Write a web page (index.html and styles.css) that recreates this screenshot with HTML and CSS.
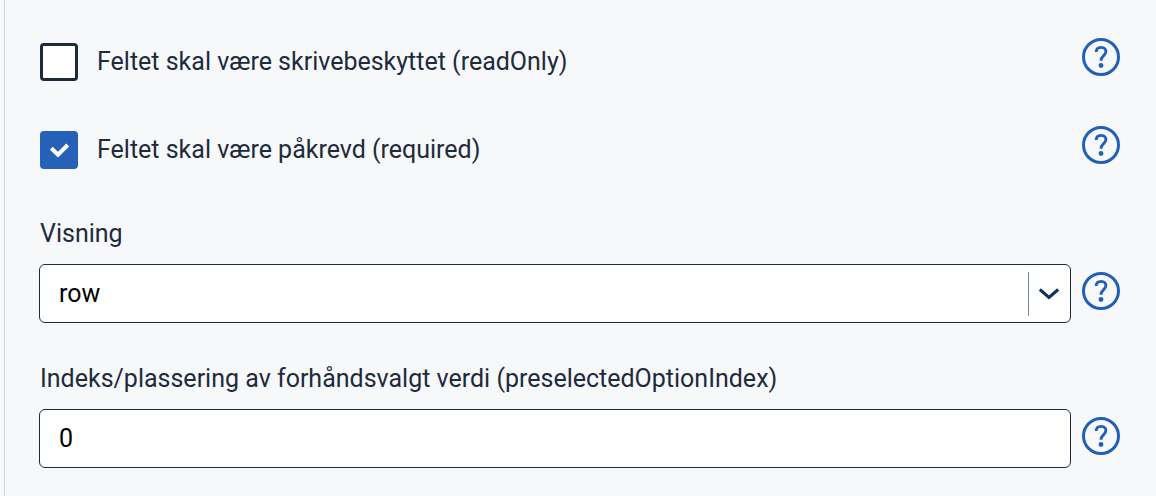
FILE: index.html
```html
<!DOCTYPE html>
<html lang="nb">
<head>
<meta charset="utf-8">
<meta name="viewport" content="width=device-width, initial-scale=1">
<title>Feltinnstillinger</title>
<link rel="stylesheet" href="styles.css">
</head>
<body>
<svg class="sprite" aria-hidden="true">
  <symbol id="help" viewBox="0 0 38 38">
    <circle cx="19" cy="19" r="17.5" fill="none" stroke="currentColor" stroke-width="3"/>
    <path d="M14.2 14C14.2 11 16.3 9.4 19.2 9.4C22 9.4 23.9 11.1 23.9 13.6C23.9 17.6 19 17.8 19 22.8" fill="none" stroke="currentColor" stroke-width="2.9"/>
    <circle cx="19" cy="27.5" r="2.4" fill="currentColor"/>
  </symbol>
</svg>
<form class="panel">
  <div class="row">
    <div class="check">
      <span class="box">
        <input class="box-input" type="checkbox" id="readonly">
        <svg class="box-mark" viewBox="0 0 38 38" aria-hidden="true"><path d="M11.3 17.2L18 23.7L27.7 14"/></svg>
      </span>
      <label class="label" for="readonly">Feltet skal være skrivebeskyttet (readOnly)</label>
    </div>
    <button class="help" type="button" aria-label="Hjelp"><svg class="help-icon"><use href="#help"/></svg></button>
  </div>
  <div class="row">
    <div class="check">
      <span class="box">
        <input class="box-input" type="checkbox" id="required" checked>
        <svg class="box-mark" viewBox="0 0 38 38" aria-hidden="true"><path d="M11.3 17.2L18 23.7L27.7 14"/></svg>
      </span>
      <label class="label" for="required">Feltet skal være påkrevd (required)</label>
    </div>
    <button class="help" type="button" aria-label="Hjelp"><svg class="help-icon"><use href="#help"/></svg></button>
  </div>
  <div class="field">
    <label class="label label-field" for="layout">Visning</label>
    <div class="row row-field">
      <div class="select">
        <select class="control" id="layout"><option selected>row</option><option>column</option></select>
        <span class="arrow"><svg class="arrow-icon" viewBox="0 0 22 14" aria-hidden="true"><path d="M1.8 2.5L11 10.5L20.2 2.5"/></svg></span>
      </div>
      <button class="help" type="button" aria-label="Hjelp"><svg class="help-icon"><use href="#help"/></svg></button>
    </div>
  </div>
  <div class="field">
    <label class="label label-field" for="index">Indeks/plassering av forhåndsvalgt verdi (preselectedOptionIndex)</label>
    <div class="row row-field">
      <input class="control" type="text" inputmode="numeric" id="index" value="0">
      <button class="help" type="button" aria-label="Hjelp"><svg class="help-icon"><use href="#help"/></svg></button>
    </div>
  </div>
</form>
</body>
</html>
```

FILE: styles.css
```css
* {
  box-sizing: border-box;
}

body {
  margin: 0;
  padding-left: 4px;
  background: #f7f8fa;
  color: #1e2b3c;
  font-family: Roboto, "Liberation Sans", sans-serif;
  font-size: 25px;
  line-height: 32px;
}

.sprite {
  display: none;
}

.panel {
  min-height: 100vh;
  padding: 38px 36px 28px 34px;
  border-left: 1px solid #d2d5d8;
}

.row {
  display: grid;
  grid-template-columns: minmax(0, 1fr) 38px;
  column-gap: 11px;
  align-items: start;
  margin-bottom: 45px;
}

.check {
  display: flex;
  align-items: center;
  gap: 19px;
  padding: 5px 0 0 1px;
}

.box {
  display: grid;
  flex: none;
  width: 38px;
  height: 38px;
}

.box-input,
.box-mark {
  grid-area: 1 / 1;
}

.box-input {
  appearance: none;
  width: 38px;
  height: 38px;
  margin: 0;
  border: 3px solid #1e2b3c;
  border-radius: 4px;
  background: #fff;
}

.box-input:checked {
  border-color: #2661b8;
  background: #2661b8;
}

.box-mark {
  width: 38px;
  height: 38px;
  fill: none;
  stroke: #fff;
  stroke-width: 4;
  pointer-events: none;
  visibility: hidden;
}

.box-input:checked + .box-mark {
  visibility: visible;
}

.help {
  display: block;
  width: 38px;
  height: 38px;
  padding: 0;
  border: 0;
  border-radius: 50%;
  background: none;
  color: #2260b8;
  cursor: pointer;
}

.help-icon {
  display: block;
  width: 38px;
  height: 38px;
}

.field {
  margin-top: 49px;
}

.field + .field {
  margin-top: 40px;
}

.label-field {
  display: block;
  margin-bottom: 14px;
  padding-left: 1px;
}

.row-field {
  margin-bottom: 0;
}

.row-field .help {
  margin-top: 8px;
}

.control {
  appearance: none;
  display: block;
  width: 100%;
  height: 59px;
  margin: 0;
  padding: 0 19px;
  border: 1px solid #1e2b3c;
  border-radius: 6px;
  background: #fff;
  color: #000;
  font: inherit;
}

.select {
  display: grid;
  align-items: center;
}

.select > * {
  grid-area: 1 / 1;
}

.arrow {
  display: flex;
  align-items: center;
  justify-content: center;
  justify-self: end;
  width: 43px;
  height: 44px;
  padding-right: 2px;
  border-left: 1px solid #6f8ba6;
  pointer-events: none;
}

.arrow-icon {
  width: 22px;
  height: 14px;
  fill: none;
  stroke: #10305c;
  stroke-width: 3;
}
```
